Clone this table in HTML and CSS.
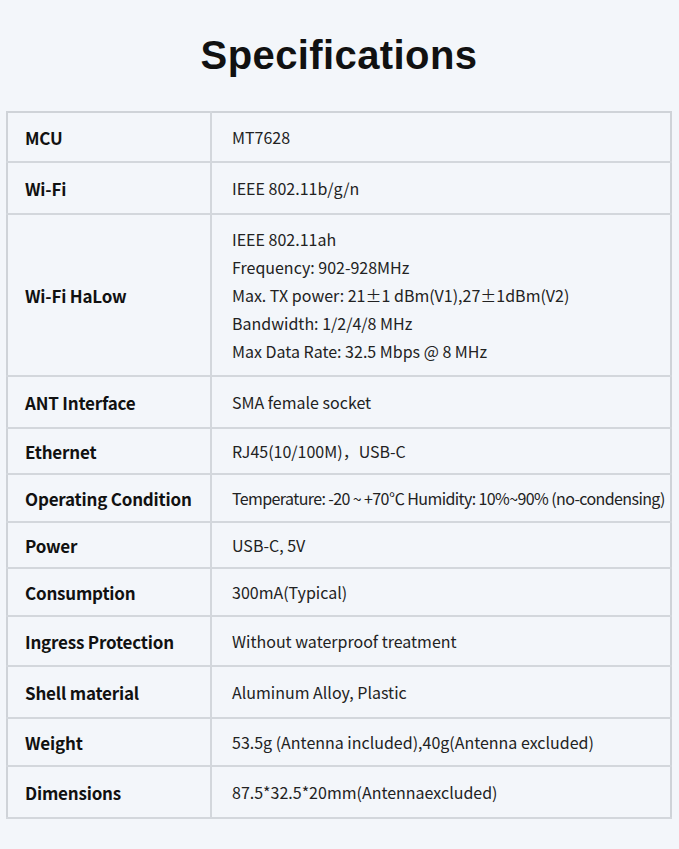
FILE: index.html
```html
<!DOCTYPE html>
<html lang="en">
<head>
  <meta charset="UTF-8" />
  <meta name="viewport" content="width=device-width, initial-scale=1.0"/>
  <title>Specifications</title>
  <link rel="stylesheet" href="styles.css">
</head>
<body>

  <h1>Specifications</h1>

  <table class="specs">
    <colgroup>
      <col class="label-col">
      <col>
    </colgroup>
    <tr class="mid">
      <th>MCU</th>
      <td>MT7628</td>
    </tr>
    <tr class="tall">
      <th>Wi-Fi</th>
      <td>IEEE 802.11b/g/n</td>
    </tr>
    <tr class="multi">
      <th>Wi-Fi HaLow</th>
      <td>
        <div>IEEE 802.11ah</div>
        <div>Frequency: 902-928MHz</div>
        <div>Max. TX power: 21±1 dBm(V1),27±1dBm(V2)</div>
        <div>Bandwidth: 1/2/4/8 MHz</div>
        <div>Max Data Rate: 32.5 Mbps @ 8 MHz</div>
      </td>
    </tr>
    <tr class="tall">
      <th>ANT Interface</th>
      <td>SMA female socket</td>
    </tr>
    <tr class="short">
      <th>Ethernet</th>
      <td>RJ45(10/100M)，USB-C</td>
    </tr>
    <tr>
      <th>Operating Condition</th>
      <td class="tight">Temperature: -20 ~ +70℃ Humidity: 10%~90% (no-condensing)</td>
    </tr>
    <tr class="short">
      <th>Power</th>
      <td>USB-C, 5V</td>
    </tr>
    <tr>
      <th>Consumption</th>
      <td>300mA(Typical)</td>
    </tr>
    <tr class="mid">
      <th>Ingress Protection</th>
      <td>Without waterproof treatment</td>
    </tr>
    <tr class="tall">
      <th>Shell material</th>
      <td>Aluminum Alloy, Plastic</td>
    </tr>
    <tr>
      <th>Weight</th>
      <td>53.5g (Antenna included),40g(Antenna excluded)</td>
    </tr>
    <tr class="tall">
      <th>Dimensions</th>
      <td>87.5*32.5*20mm(Antennaexcluded)</td>
    </tr>
  </table>

</body>
</html>
```

FILE: styles.css
```css
body {
  font-family: "Noto Sans CJK SC", "Noto Sans", sans-serif;
  background: #f3f6fa;
  color: #111;
  margin: 0;
  padding: 0 7px 0 6px;
}

h1 {
  font-family: "Liberation Sans", Arial, sans-serif;
  text-align: center;
  font-size: 40px;
  font-weight: 700;
  line-height: 50px;
  letter-spacing: 0.4px;
  margin: 0;
  padding: 30px 0 31px;
}

.specs {
  width: 100%;
  table-layout: fixed;
  border-collapse: collapse;
  border: 2px solid #cfd3d8;
}

.specs .label-col {
  width: 204px;
}

.specs tr {
  height: 48px;
  border-bottom: 2px solid #d3d7dc;
}

.specs tr.short {
  height: 46px;
}

.specs tr.mid {
  height: 50px;
}

.specs tr.tall {
  height: 52px;
}

.specs tr.multi {
  height: 162px;
}

.specs th {
  text-align: left;
  font-size: 17px;
  font-weight: 700;
  white-space: nowrap;
  letter-spacing: -0.2px;
  padding: 0 0 0 17px;
  border-right: 2px solid #d3d7dc;
}

.specs td {
  font-size: 16px;
  color: #222;
  white-space: nowrap;
  padding: 0 4px 0 20px;
}

.specs td.tight {
  letter-spacing: -0.6px;
}

.specs tr.multi td div {
  line-height: 28px;
}
```
